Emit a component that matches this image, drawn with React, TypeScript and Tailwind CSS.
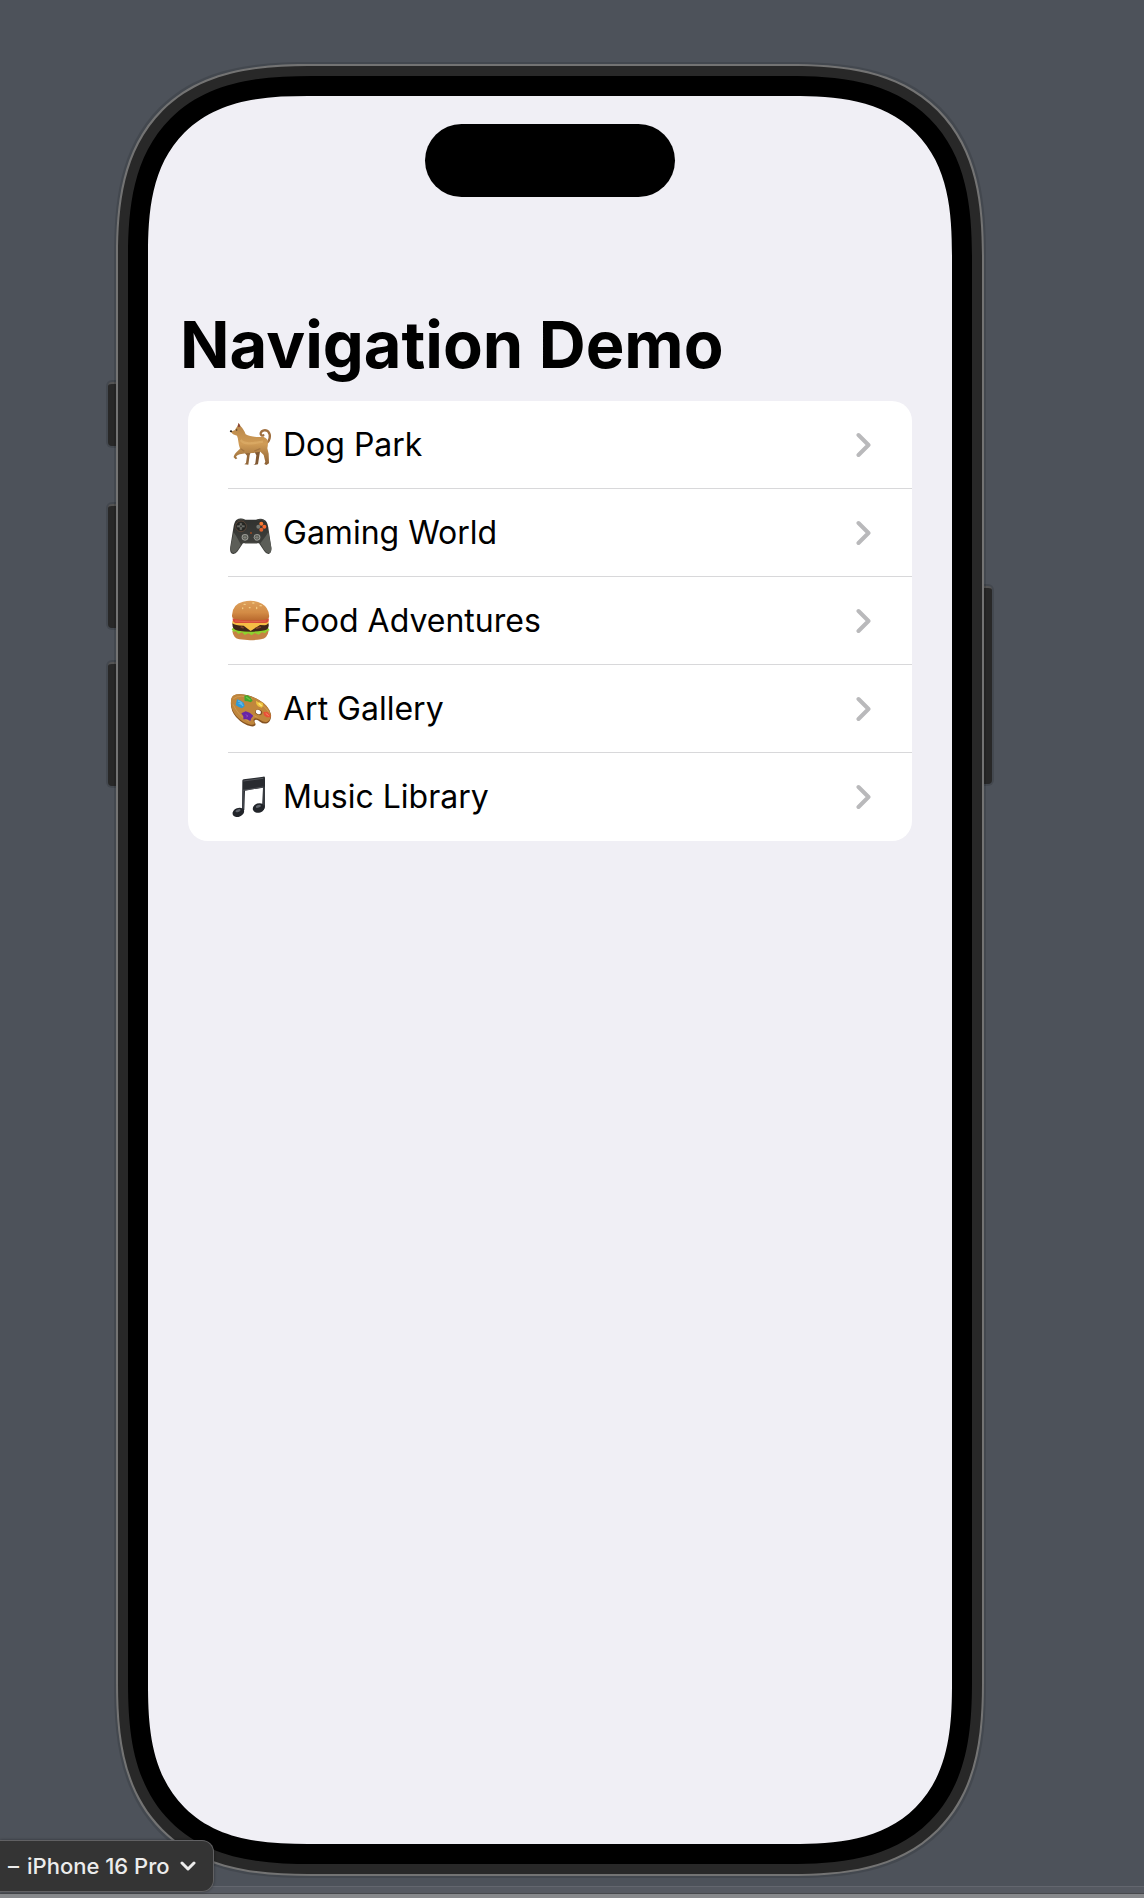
import type { ReactNode } from "react";

function DogIcon() {
  return (
    <svg viewBox="0 0 132 132" className="size-11" aria-hidden="true">
      <defs>
        <linearGradient id="dogCoat" x1="0" y1="0" x2="0" y2="1">
          <stop offset="0" stopColor="#b58449" />
          <stop offset=".5" stopColor="#d09c56" />
          <stop offset="1" stopColor="#8a5f34" />
        </linearGradient>
      </defs>
      <path d="M110 62C122 56 127 37 118 26C111 19 97 21 95 31C94 36 99 39 103 37" fill="none" stroke="#a07040" strokeWidth="7" strokeLinecap="round" />
      <path d="M74 82L82 97L79 120Q79 124 73 124L79 125L87 124L91 98L94 80Z" fill="#805832" />
      <path d="M41 82L54 98L51 120L46 124L58 125L62 96L66 86Z" fill="#926638" />
      <path d="M26 8L29 0L35 10C41 15 46 24 50 34C62 42 86 43 104 42C117 46 119 58 115 76L119 92L120 121L112 126L106 123L109 116L104 96L94 86L73 90L51 91C38 92 25 95 21 101L25 106L20 109L14 103C15 92 25 85 33 77C27 61 29 49 24 38L12 34L5 26L17 22Z" fill="url(#dogCoat)" />
      <path d="M26 10L29 0L34 10L30 13Z" fill="#8a4436" />
      <ellipse cx="6" cy="25" rx="3.5" ry="3" fill="#302923" />
      <circle cx="23" cy="21" r="2" fill="#352a20" />
      <path d="M35 51C46 67 75 60 102 56" fill="none" stroke="#e4b873" strokeWidth="7" opacity=".45" />
      <path d="M35 77L46 85M76 84L94 77" fill="none" stroke="#8b6036" strokeWidth="4" opacity=".5" />
    </svg>
  );
}

function ControllerIcon() {
  return (
    <svg viewBox="0 0 132 132" className="size-11" aria-hidden="true">
      <defs>
        <linearGradient id="padBody" x1="0" y1="0" x2="0" y2="1">
          <stop offset="0" stopColor="#30312f" />
          <stop offset="1" stopColor="#454641" />
        </linearGradient>
      </defs>
      <path d="M22 27Q34 19 49 26H81Q98 19 110 29Q117 36 119 57L127 109Q129 126 119 129Q112 130 106 121L90 97H42L26 121Q18 131 10 128Q1 125 4 106L13 51Q15 34 22 27Z" fill="url(#padBody)" />
      <path d="M14 64L5 109Q5 123 13 126Q19 126 26 116L36 101L22 76ZM118 63L127 110Q128 123 121 127Q113 127 106 117L94 97L110 76Z" fill="#5c5e58" />
      <path d="M26 28Q35 22 46 27M86 27Q99 21 108 31" fill="none" stroke="#555650" strokeWidth="2" />
      <circle cx="36" cy="46" r="16" fill="#262725" stroke="#70513e" strokeWidth="2" />
      <path d="M31 35H40V42H48V50H40V58H31V50H23V42H31Z" fill="#686964" stroke="#20211f" strokeWidth="2" />
      <circle cx="36" cy="46" r="3" fill="#30312e" />
      <circle cx="97" cy="38" r="6" fill="#f67932" />
      <circle cx="106" cy="47" r="6" fill="#fa672c" />
      <circle cx="97" cy="56" r="6" fill="#e0602c" />
      <circle cx="88" cy="47" r="6" fill="#777973" />
      <circle cx="66" cy="66" r="3" fill="#984b24" />
      <circle cx="48" cy="79" r="10" fill="#9a9b95" />
      <circle cx="48" cy="79" r="7" fill="#555750" />
      <circle cx="84" cy="79" r="10" fill="#9a9b95" />
      <circle cx="84" cy="79" r="7" fill="#555750" />
      <path d="M42 79H53M78 79H89M48 74V84M84 74V84" stroke="#94958e" strokeWidth="2" />
      <path d="M48 97H84" stroke="#7d7f78" strokeWidth="2" />
    </svg>
  );
}

function BurgerIcon() {
  return (
    <svg viewBox="0 0 132 132" className="size-11" aria-hidden="true">
      <defs>
        <linearGradient id="bunTop" x1="0" y1="0" x2="0" y2="1">
          <stop offset="0" stopColor="#dda15d" />
          <stop offset=".6" stopColor="#d38b45" />
          <stop offset="1" stopColor="#b8682d" />
        </linearGradient>
      </defs>
      <path d="M10 96Q13 118 31 121Q63 126 96 121Q116 117 119 95Z" fill="#c58243" />
      <path d="M8 91L13 98L21 97L28 105L39 100L47 108L58 103L68 109L77 102L89 107L99 100L108 103L114 97L122 94L115 83H15Z" fill="#8ed12e" />
      <path d="M10 75Q10 66 25 66H108Q121 68 119 81Q118 95 99 95Q65 101 28 95Q10 93 10 75Z" fill="#3e2619" />
      <path d="M10 65H119Q121 76 108 79L93 78L65 96L44 80Q18 80 10 73Z" fill="#f6bd45" />
      <path d="M11 58Q62 66 119 58Q122 70 108 72H20Q10 70 11 58Z" fill="#d64b37" />
      <path d="M18 66Q65 71 111 66" fill="none" stroke="#e4745a" strokeWidth="2" />
      <path d="M9 49Q10 15 42 8Q73 0 99 14Q118 25 120 48Q123 60 109 62Q64 68 19 61Q8 59 9 49Z" fill="url(#bunTop)" />
      <g fill="#f3cf87">
        <ellipse cx="47" cy="16" rx="4" ry="2" />
        <ellipse cx="62" cy="26" rx="3" ry="2" />
        <ellipse cx="73" cy="12" rx="4" ry="2" />
        <ellipse cx="83" cy="27" rx="2" ry="4" />
        <ellipse cx="95" cy="20" rx="4" ry="2" />
        <ellipse cx="41" cy="28" rx="2" ry="3" />
      </g>
      <path d="M35 83L44 87M80 88L96 84" stroke="#7d4228" strokeWidth="5" />
    </svg>
  );
}

function PaletteIcon() {
  return (
    <svg viewBox="0 0 132 132" className="size-11" aria-hidden="true">
      <path d="M7 37Q10 22 31 22Q57 21 88 38Q120 55 126 82Q128 100 116 108Q104 113 93 104Q84 96 78 99Q74 103 80 111Q79 120 66 118Q43 114 21 90Q1 67 7 37Z" fill="#855221" />
      <path d="M7 34Q12 20 34 22Q62 23 89 38Q120 56 125 81Q127 97 115 104Q105 108 94 99Q82 91 75 95Q71 101 78 108Q76 115 65 113Q42 109 22 87Q2 65 7 34Z" fill="#c0863c" />
      <path d="M13 35Q34 20 70 36M12 52Q29 88 61 104M65 84Q77 86 86 91M96 52Q112 62 119 75" fill="none" stroke="#d8a35a" strokeWidth="2" />
      <ellipse cx="89" cy="76" rx="11" ry="8" transform="rotate(20 89 76)" fill="#805024" />
      <ellipse cx="88" cy="75" rx="8" ry="6" transform="rotate(20 88 75)" fill="white" />
      <path d="M24 37L33 40L44 47L47 57L39 64L29 60L20 54L22 45Z" fill="#2d9ad7" />
      <path d="M27 42Q33 43 38 48L33 50Q40 52 42 57" fill="none" stroke="#60b6e6" strokeWidth="4" />
      <path d="M46 26L55 25L64 31L71 41L65 46L56 43L47 42Z" fill="#42a72d" />
      <path d="M51 30L64 39" stroke="#6cc545" strokeWidth="4" />
      <path d="M81 41L88 46L101 47L103 56L98 62L87 58L82 51Z" fill="#efc43e" />
      <path d="M89 49L98 57" stroke="#ffe77d" strokeWidth="4" />
      <path d="M103 75L115 74L124 84L124 91L113 91L105 85Z" fill="#e75036" />
      <path d="M110 79L119 86" stroke="#ff8a68" strokeWidth="3" />
      <path d="M37 79L50 73L62 77L73 86L67 94L64 102L54 97L43 97L43 88Z" fill="#6925a6" />
      <path d="M50 83L57 87L52 90" fill="none" stroke="#8c45c0" strokeWidth="3" />
    </svg>
  );
}

function NotesIcon() {
  return (
    <svg viewBox="0 0 132 132" className="size-11" aria-hidden="true">
      <path d="M40 17Q40 14 44 13L103 5Q108 4 108 9V94Q108 101 103 106L99 99L102 38L48 47L46 105L39 112Z" fill="#292c31" />
      <path d="M43 16L106 8V36L44 46Z" fill="#292b30" />
      <path d="M43 18L103 10M43 46L102 36" stroke="#65676c" strokeWidth="2" />
      <ellipse cx="28" cy="112" rx="18" ry="13" transform="rotate(-20 28 112)" fill="#22252a" />
      <ellipse cx="89" cy="99" rx="18" ry="14" transform="rotate(-20 89 99)" fill="#22252a" />
      <ellipse cx="27" cy="107" rx="8" ry="4" transform="rotate(-20 27 107)" fill="#9297a0" opacity=".55" />
      <ellipse cx="88" cy="94" rx="8" ry="4" transform="rotate(-20 88 94)" fill="#9297a0" opacity=".55" />
      <path d="M43 44V101M105 35V91" stroke="#565a60" strokeWidth="2" />
    </svg>
  );
}

const destinations: { label: string; icon: ReactNode }[] = [
  { label: "Dog Park", icon: <DogIcon /> },
  { label: "Gaming World", icon: <ControllerIcon /> },
  { label: "Food Adventures", icon: <BurgerIcon /> },
  { label: "Art Gallery", icon: <PaletteIcon /> },
  { label: "Music Library", icon: <NotesIcon /> },
];

const sideKey =
  "absolute w-2 border-t-2 border-[#545454] bg-[#282828] shadow-[0_0_0_2px_#0000001f]";

export default function App() {
  return (
    <div className="relative flex min-h-screen flex-col bg-[#4d525a] pt-16 font-['Inter',sans-serif]">
      <main className="relative mr-40 ml-[116px] flex flex-1 flex-col">
        <span className={`${sideKey} top-[318px] -left-2 h-16 rounded-l-sm`} />
        <span className={`${sideKey} top-[440px] -left-2 h-[124px] rounded-l-sm`} />
        <span className={`${sideKey} top-[598px] -left-2 h-[124px] rounded-l-sm`} />
        <span className={`${sideKey} top-[522px] -right-2 h-[198px] rounded-r-sm`} />
        <div className="relative flex flex-1 flex-col rounded-[156px] border-2 border-[#737373] bg-[#282828] p-2.5 shadow-[0_0_0_2px_#0000001f] supports-[corner-shape:round]:rounded-[196px] supports-[corner-shape:round]:[corner-shape:superellipse(1.4)]">
          <div className="flex flex-1 flex-col rounded-[144px] bg-black p-5 supports-[corner-shape:round]:rounded-[184px] supports-[corner-shape:round]:[corner-shape:superellipse(1.4)]">
            <div className="flex flex-1 flex-col rounded-[124px] bg-[#f0eff5] pt-7 supports-[corner-shape:round]:rounded-[160px] supports-[corner-shape:round]:[corner-shape:superellipse(1.42)]">
              <div className="h-[73px] w-[250px] self-center rounded-full bg-black" />
              <h1 className="mt-[108px] pl-8 text-[65px] leading-20 font-bold text-black">
                Navigation Demo
              </h1>
              <nav className="mx-10 mt-4 overflow-hidden rounded-[20px] bg-white" aria-label="Destinations">
                <ul>
                  {destinations.map(({ label, icon }) => (
                    <li key={label} className="group pl-10">
                      <a
                        href="#"
                        className="flex h-22 items-center border-b border-[#d8d8da] pr-[41px] pl-px text-[32px] text-black group-last:border-0"
                      >
                        {icon}
                        <span className="ml-2.5 flex-1">{label}</span>
                        <svg viewBox="0 0 16 26" className="h-[26px] w-4" fill="none" stroke="#b9b9bb" strokeWidth="4" strokeLinecap="round" strokeLinejoin="round" aria-hidden="true">
                          <path d="M3.500 3L13.500 13L3.500 23" />
                        </svg>
                      </a>
                    </li>
                  ))}
                </ul>
              </nav>
            </div>
          </div>
        </div>
      </main>
      <footer className="mt-2.5">
        <div className="h-2 border-y border-t-[#63666e] border-b-[#46484c] bg-[#555961]" />
        <div className="h-1 bg-[#87898c]" />
      </footer>
      <button
        type="button"
        className="absolute bottom-1.5 left-0 flex h-[52px] items-center rounded-r-xl border border-l-0 border-[#616163] bg-[#343434] pr-[17px] pl-2 text-[22px] font-medium text-[#ececec] shadow-[0_0_3px_#0006]"
      >
        <span className="mr-2">–</span>
        <span>iPhone 16 Pro</span>
        <svg viewBox="0 0 16 12" className="ml-2.5 h-3 w-4" fill="none" stroke="currentColor" strokeWidth="3" strokeLinecap="round" strokeLinejoin="round" aria-hidden="true">
          <path d="M2 3L8 9L14 3" />
        </svg>
      </button>
    </div>
  );
}
